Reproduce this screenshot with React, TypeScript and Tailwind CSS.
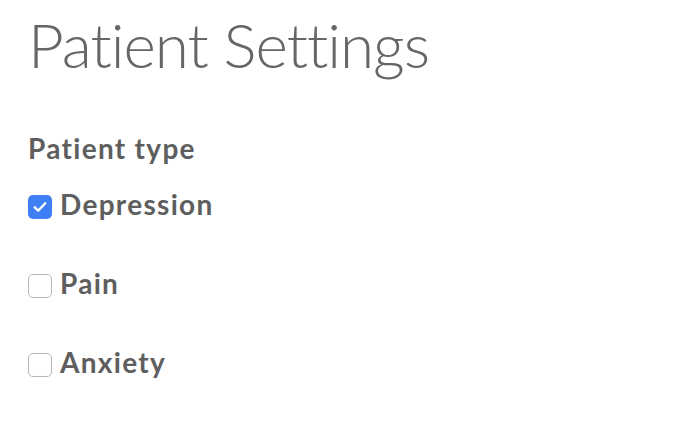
import { useState } from "react";

type Option = {
    label: string;
    checked: boolean;
};

const initial: Option[] = [
    { label: "Depression", checked: true },
    { label: "Pain", checked: false },
    { label: "Anxiety", checked: false },
];

const App = () => {
    const [isOptions, setOptions] = useState<Option[]>(initial);

    return (
        <div className="w-full h-screen bg-white font-['Lato','Liberation_Sans',sans-serif] text-[#5e5e5e] pl-[28px]">
            <h1 className="text-[62px] font-light leading-none pt-[13px] text-[#666666] tracking-[-1px]">
                Patient Settings
            </h1>
            <h3 className="text-[28px] font-bold mt-[59px] leading-none tracking-[1.3px]">
                Patient type
            </h3>
            <div className="flex flex-col gap-[50px] mt-[28px]">
                {isOptions.map((item, i) => (
                    <label key={i} className="flex items-start gap-[8px] cursor-pointer">
                        <span
                            onClick={() => {
                                const next = [...isOptions];
                                next[i] = { ...item, checked: !item.checked };
                                setOptions(next);
                            }}
                            className={`w-[24px] h-[24px] rounded-[5px] flex items-center justify-center mt-[5px] shrink-0 ${
                                item.checked
                                    ? "bg-[#3e7ff5]"
                                    : "bg-white border border-[#b8b8b8]"
                            }`}
                        >
                            {item.checked && (
                                <svg viewBox="0 0 24 24" className="w-[18px] h-[18px]" fill="none" stroke="white" strokeWidth={3.2} strokeLinecap="round" strokeLinejoin="round">
                                    <path d="M5 12.5l4.5 4.5L19 7" />
                                </svg>
                            )}
                        </span>
                        <span className="text-[28px] font-bold leading-[28px] tracking-[1.3px]">{item.label}</span>
                    </label>
                ))}
            </div>
        </div>
    );
};
export default App;
